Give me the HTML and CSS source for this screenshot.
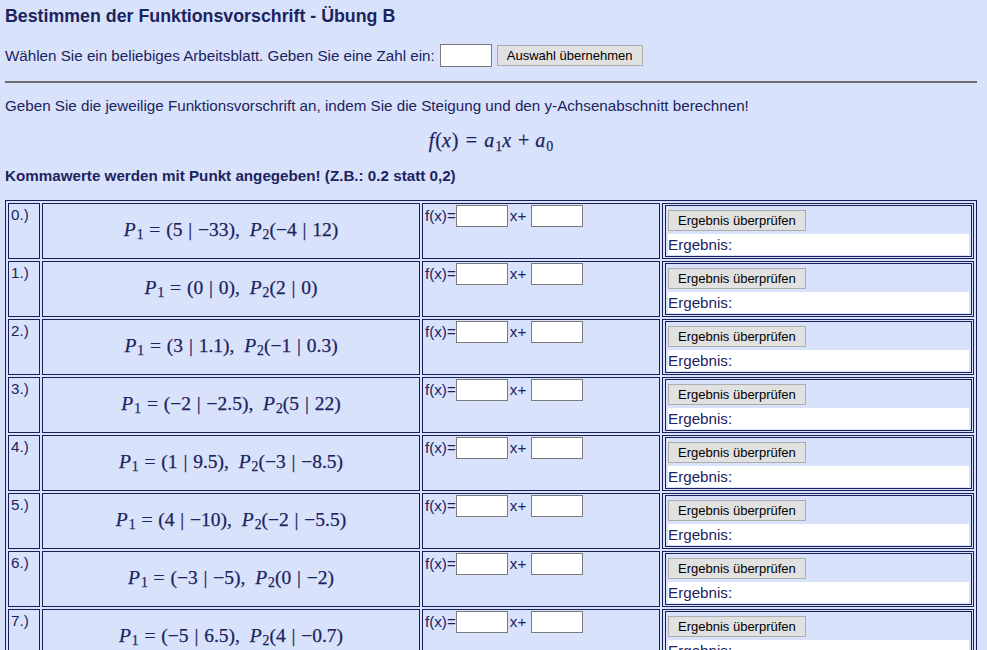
FILE: index.html
```html
<!DOCTYPE html>
<html lang="de">
<head>
<meta charset="utf-8">
<title>Bestimmen der Funktionsvorschrift - Übung B</title>
<link rel="stylesheet" href="styles.css">
</head>
<body>
<h1 class="title">Bestimmen der Funktionsvorschrift - Übung B</h1>
<div class="select"><span>Wählen Sie ein beliebiges Arbeitsblatt. Geben Sie eine Zahl ein:</span><input class="num" type="text"><button class="btn">Auswahl übernehmen</button></div>
<hr class="sep">
<p class="intro">Geben Sie die jeweilige Funktionsvorschrift an, indem Sie die Steigung und den y-Achsenabschnitt berechnen!</p>
<div class="formula"><i>f</i>(<i>x</i>)<span class="rel">=</span><i>a</i><sub>1</sub><i>x</i><span class="bin">+</span><i>a</i><sub>0</sub></div>
<p class="note">Kommawerte werden mit Punkt angegeben! (Z.B.: 0.2 statt 0,2)</p>
<table class="grid">
<colgroup><col class="c1"><col class="c2"><col class="c3"><col class="c4"></colgroup>
<tbody>
<tr><td class="idx">0.)</td><td class="math"><i>P</i><sub>1</sub><span class="rel">=</span>(5<span class="rel">|</span>−33),&nbsp;&nbsp;<i>P</i><sub>2</sub>(−4<span class="rel">|</span>12)</td><td class="fx">f(x)=<input class="num a1" type="text">x+ <input class="num" type="text"></td><td class="res"><div class="box"><button class="btn chk">Ergebnis überprüfen</button><div class="out">Ergebnis:</div></div></td></tr>
<tr><td class="idx">1.)</td><td class="math"><i>P</i><sub>1</sub><span class="rel">=</span>(0<span class="rel">|</span>0),&nbsp;&nbsp;<i>P</i><sub>2</sub>(2<span class="rel">|</span>0)</td><td class="fx">f(x)=<input class="num a1" type="text">x+ <input class="num" type="text"></td><td class="res"><div class="box"><button class="btn chk">Ergebnis überprüfen</button><div class="out">Ergebnis:</div></div></td></tr>
<tr><td class="idx">2.)</td><td class="math"><i>P</i><sub>1</sub><span class="rel">=</span>(3<span class="rel">|</span>1.1),&nbsp;&nbsp;<i>P</i><sub>2</sub>(−1<span class="rel">|</span>0.3)</td><td class="fx">f(x)=<input class="num a1" type="text">x+ <input class="num" type="text"></td><td class="res"><div class="box"><button class="btn chk">Ergebnis überprüfen</button><div class="out">Ergebnis:</div></div></td></tr>
<tr><td class="idx">3.)</td><td class="math"><i>P</i><sub>1</sub><span class="rel">=</span>(−2<span class="rel">|</span>−2.5),&nbsp;&nbsp;<i>P</i><sub>2</sub>(5<span class="rel">|</span>22)</td><td class="fx">f(x)=<input class="num a1" type="text">x+ <input class="num" type="text"></td><td class="res"><div class="box"><button class="btn chk">Ergebnis überprüfen</button><div class="out">Ergebnis:</div></div></td></tr>
<tr><td class="idx">4.)</td><td class="math"><i>P</i><sub>1</sub><span class="rel">=</span>(1<span class="rel">|</span>9.5),&nbsp;&nbsp;<i>P</i><sub>2</sub>(−3<span class="rel">|</span>−8.5)</td><td class="fx">f(x)=<input class="num a1" type="text">x+ <input class="num" type="text"></td><td class="res"><div class="box"><button class="btn chk">Ergebnis überprüfen</button><div class="out">Ergebnis:</div></div></td></tr>
<tr><td class="idx">5.)</td><td class="math"><i>P</i><sub>1</sub><span class="rel">=</span>(4<span class="rel">|</span>−10),&nbsp;&nbsp;<i>P</i><sub>2</sub>(−2<span class="rel">|</span>−5.5)</td><td class="fx">f(x)=<input class="num a1" type="text">x+ <input class="num" type="text"></td><td class="res"><div class="box"><button class="btn chk">Ergebnis überprüfen</button><div class="out">Ergebnis:</div></div></td></tr>
<tr><td class="idx">6.)</td><td class="math"><i>P</i><sub>1</sub><span class="rel">=</span>(−3<span class="rel">|</span>−5),&nbsp;&nbsp;<i>P</i><sub>2</sub>(0<span class="rel">|</span>−2)</td><td class="fx">f(x)=<input class="num a1" type="text">x+ <input class="num" type="text"></td><td class="res"><div class="box"><button class="btn chk">Ergebnis überprüfen</button><div class="out">Ergebnis:</div></div></td></tr>
<tr><td class="idx">7.)</td><td class="math"><i>P</i><sub>1</sub><span class="rel">=</span>(−5<span class="rel">|</span>6.5),&nbsp;&nbsp;<i>P</i><sub>2</sub>(4<span class="rel">|</span>−0.7)</td><td class="fx">f(x)=<input class="num a1" type="text">x+ <input class="num" type="text"></td><td class="res"><div class="box"><button class="btn chk">Ergebnis überprüfen</button><div class="out">Ergebnis:</div></div></td></tr>
</tbody>
</table>
</body>
</html>
```
FILE: styles.css
```css
html, body {
  background: #d9e2fb;
}
body {
  margin: 0;
  padding: 0 5px;
  color: #1c2360;
  font-family: "Liberation Sans", Arial, sans-serif;
  font-size: 15.2px;
}
.title {
  font-size: 17.8px;
  font-weight: bold;
  line-height: 20px;
  margin: 6px 0 0;
}
.select {
  display: flex;
  align-items: center;
  gap: 5px;
  height: 23px;
  margin-top: 18px;
}
.num {
  box-sizing: border-box;
  width: 52px;
  height: 22px;
  margin: 0;
  padding: 0 2px;
  border: 1px solid #7a7a7a;
  background: #fff;
  font: 13px "Liberation Sans", Arial, sans-serif;
}
.select .num {
  height: 23px;
}
.fx .a1 {
  margin-right: 2px;
}
.btn {
  box-sizing: border-box;
  height: 21px;
  margin: 0;
  padding: 0 9px;
  border: 1px solid #adadad;
  background: #e1e1e1;
  color: #000;
  font: 13px "Liberation Sans", Arial, sans-serif;
}
.sep {
  width: 972px;
  height: 0;
  margin: 14px 0 0;
  border: 0;
  border-top: 2px solid #6d6d6d;
}
.intro {
  margin: 14px 0 0;
  line-height: 18px;
}
.formula {
  width: 972px;
  margin-top: 12px;
  text-align: center;
  line-height: 26px;
  font-family: "Liberation Serif", "Times New Roman", serif;
  font-size: 20px;
  -webkit-text-stroke: 0.25px #1c2360;
}
.formula sub, .math sub {
  font-size: 0.7em;
  line-height: 0;
  vertical-align: -0.25em;
}
.formula i, .math i {
  margin-right: 1px;
}
.formula .rel {
  margin: 0 0.36em;
}
.rel {
  margin: 0 0.3em;
}
.bin {
  margin: 0 0.3em;
}
.note {
  margin: 14px 0 0;
  font-size: 15.2px;
  font-weight: bold;
  line-height: 18px;
}
.grid {
  width: 972px;
  margin-top: 15px;
  table-layout: fixed;
  border-collapse: separate;
  border-spacing: 2px;
  border: 1px solid #1a1f5e;
}
.c1 { width: 32px; }
.c2 { width: 378px; }
.c3 { width: 238px; }
.c4 { width: 312px; }
.grid td {
  border: 1px solid #1a1f5e;
  padding: 1px;
  vertical-align: top;
}
.grid td.idx {
  padding: 2px 1px 1px 2px;
  line-height: 17px;
}
.grid td.math {
  vertical-align: middle;
  text-align: center;
  font-family: "Liberation Serif", "Times New Roman", serif;
  font-size: 19.5px;
  -webkit-text-stroke: 0.25px #1c2360;
  padding: 0 1px 3px;
}
.grid td.fx {
  padding: 1px 1px 1px 2px;
  line-height: 18px;
}
.grid td.res {
  padding: 1px 1px 1px 2px;
}
.box {
  border: 1px solid #1a1f5e;
  padding: 1px 2px;
}
.chk {
  display: block;
  margin: 3px 0;
}
.out {
  height: 21px;
  line-height: 21px;
  background: #fff;
}
```
